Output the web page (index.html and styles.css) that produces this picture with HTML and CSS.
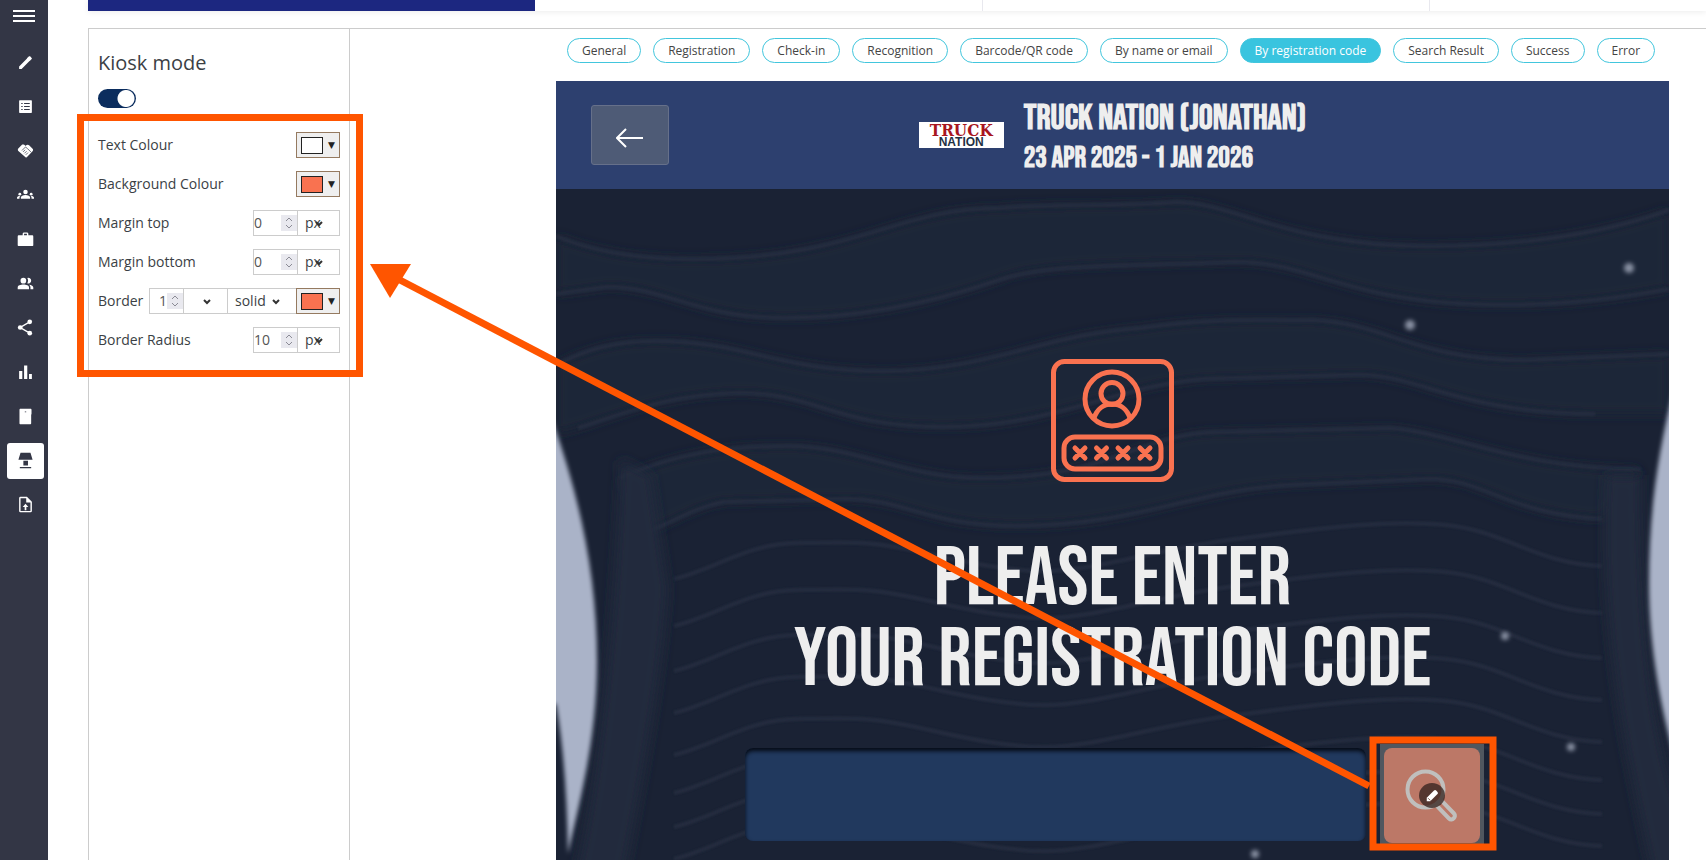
FILE: index.html
```html
<!DOCTYPE html>
<html lang="en">
<head>
<meta charset="utf-8">
<title>Kiosk mode</title>
<link rel="stylesheet" href="styles.css">
</head>
<body>
<div class="shell">
  <nav class="sidebar" aria-label="Main">
    <button class="burger" aria-label="Menu"><span></span><span></span><span></span></button>
    <div class="nav-list">
      <a class="nav-item" href="#" aria-label="Edit"><svg viewBox="0 0 24 24"><path d="M3 17.5V21h3.5L18 9.500 14.500 6zM20.700 7c.5-.5.5-1.100 0-1.500l-2.200-2.200c-.5-.4-1.100-.4-1.500 0L14 6l4 4z"/></svg></a>
      <a class="nav-item" href="#" aria-label="List"><svg viewBox="0 0 24 24"><path fill-rule="evenodd" d="M4 3h16a1 1 0 0 1 1 1v16a1 1 0 0 1-1 1H4a1 1 0 0 1-1-1V4a1 1 0 0 1 1-1zm2 4v1.500h2V7zm4 0v1.500h8V7zm-4 4.200v1.500h2v-1.500zm4 0v1.500h8v-1.500zm-4 4.300V17h2v-1.500zm4 0V17h8v-1.500z"/></svg></a>
      <a class="nav-item" href="#" aria-label="Partners"><svg viewBox="0 0 24 24"><path d="M7 4 1.500 9.500c-.5.8-.4 2 0 2.700L12 21.500c1 .6 2 .2 2.500-.6L22 13c1-1 1-2.300 0-3.300L17.500 5c-1.500-1.300-3.500-1.300-5 0L12 5.500C10.500 4 8.500 3.200 7 4z"/><path class="nav-cut" d="m7 12 5-5 3 2.500 5 5M8.500 14l3-3M10.500 16l3-3M12.500 18l3-3"/></svg></a>
      <a class="nav-item" href="#" aria-label="Groups"><svg viewBox="0 0 24 24"><circle cx="12" cy="8.500" r="3.200"/><path d="M5.500 18v-1.600c0-2.300 3-3.600 6.500-3.600s6.500 1.300 6.500 3.600V18z"/><circle cx="4" cy="11.500" r="2"/><circle cx="20" cy="11.500" r="2"/><path d="M0 18v-1.500c0-1.700 2-2.500 4.700-2.400-.8.700-1.200 1.500-1.200 2.400V18zM24 18v-1.500c0-1.700-2-2.500-4.700-2.400.8.700 1.200 1.500 1.200 2.400V18z"/></svg></a>
      <a class="nav-item" href="#" aria-label="Work"><svg viewBox="0 0 24 24"><path fill-rule="evenodd" d="M20 6h-4V4a2 2 0 0 0-2-2h-4a2 2 0 0 0-2 2v2H2a2 2 0 0 0-1 2v12a1 1 0 0 0 1 1h20a1 1 0 0 0 1-1V8a2 2 0 0 0-1-2zm-6 0h-4V4h4z"/></svg></a>
      <a class="nav-item" href="#" aria-label="People"><svg viewBox="0 0 24 24"><circle cx="9" cy="8" r="4"/><path d="M1 20v-2.500C1 14.800 5 13.500 9 13.500s8 1.300 8 4V20zM14.500 4.300a4 4 0 1 1 0 7.400c1.500-2 1.500-5.400 0-7.400zM17 13.700c3.500.4 6 1.700 6 3.800V20h-4v-2.500c0-1.500-.7-2.800-2-3.800z"/></svg></a>
      <a class="nav-item" href="#" aria-label="Share"><svg viewBox="0 0 24 24"><circle cx="18" cy="4" r="3.300"/><circle cx="4.500" cy="12" r="3.300"/><circle cx="18" cy="20" r="3.300"/><path class="nav-line" d="M18 4 4.500 12 18 20"/></svg></a>
      <a class="nav-item" href="#" aria-label="Reports"><svg viewBox="0 0 24 24"><path d="M3 10h4.500v11H3zM10 2h4.500v19H10zM17 14h4v7h-4z"/></svg></a>
      <a class="nav-item" href="#" aria-label="Badges"><svg viewBox="0 0 24 24"><path fill-rule="evenodd" d="M5 1h14c1 0 1.500.6 1.500 1.500V8L20 10v11.500c0 .9-.5 1.500-1.500 1.500H5c-1 0-1.500-.6-1.500-1.500v-19C3.500 1.600 4 1 5 1zm6 4v1h2V5z"/></svg></a>
      <a class="nav-item active" href="#" aria-label="Kiosk" aria-current="page"><svg viewBox="0 0 24 24"><path d="M5 1h14l3 10H2zM9 12.500h6.500V19H9zM4 21h16v2H4z"/></svg></a>
      <a class="nav-item" href="#" aria-label="Upload file"><svg viewBox="0 0 24 24"><path fill-rule="evenodd" d="M14 1H5a2 2 0 0 0-2 2v18a2 2 0 0 0 2 2h14a2 2 0 0 0 2-2V8zm5 20H5V3h8v6h6zM8 15.500h2.800V20h2.400v-4.500H16L12 11z"/></svg></a>
    </div>
  </nav>

  <main class="main">
    <div class="steps"><span class="step done"></span><span class="step"></span><span class="step"></span><span class="step"></span></div>
    <div class="workspace">
      <aside class="panel">
        <h1 class="panel-title"><label for="kiosk">Kiosk mode</label></h1>
        <input class="toggle" id="kiosk" type="checkbox" role="switch" checked>
        <div class="fields">
          <div class="field"><label for="tc">Text Colour</label><button class="colour" id="tc"><span class="swatch white"></span><span class="caret">▼</span></button></div>
          <div class="field"><label for="bc">Background Colour</label><button class="colour" id="bc"><span class="swatch"></span><span class="caret">▼</span></button></div>
          <div class="field"><label for="mt">Margin top</label><span class="num"><input id="mt" type="number" value="0"><svg class="spin" viewBox="0 0 16 16"><path d="m5 6 3-3 3 3M5 10l3 3 3-3"/></svg></span><span class="pick unit"><select aria-label="Margin top unit"><option>px</option></select><svg viewBox="0 0 8 8"><path d="m1 3 3 3 3-3"/></svg></span></div>
          <div class="field"><label for="mb">Margin bottom</label><span class="num"><input id="mb" type="number" value="0"><svg class="spin" viewBox="0 0 16 16"><path d="m5 6 3-3 3 3M5 10l3 3 3-3"/></svg></span><span class="pick unit"><select aria-label="Margin bottom unit"><option>px</option></select><svg viewBox="0 0 8 8"><path d="m1 3 3 3 3-3"/></svg></span></div>
          <div class="field"><label for="bw">Border</label><span class="num short"><input id="bw" type="number" value="1"><svg class="spin" viewBox="0 0 16 16"><path d="m5 6 3-3 3 3M5 10l3 3 3-3"/></svg></span><span class="pick blank"><select aria-label="Border unit"><option></option></select><svg viewBox="0 0 8 8"><path d="m1 3 3 3 3-3"/></svg></span><span class="pick style"><select aria-label="Border style"><option>solid</option></select><svg viewBox="0 0 8 8"><path d="m1 3 3 3 3-3"/></svg></span><button class="colour" aria-label="Border colour"><span class="swatch"></span><span class="caret">▼</span></button></div>
          <div class="field"><label for="br">Border Radius</label><span class="num"><input id="br" type="number" value="10"><svg class="spin" viewBox="0 0 16 16"><path d="m5 6 3-3 3 3M5 10l3 3 3-3"/></svg></span><span class="pick unit"><select aria-label="Border radius unit"><option>px</option></select><svg viewBox="0 0 8 8"><path d="m1 3 3 3 3-3"/></svg></span></div>
        </div>
      </aside>

      <section class="preview">
        <div class="tabs">
          <button class="tab">General</button><button class="tab">Registration</button><button class="tab">Check-in</button><button class="tab">Recognition</button><button class="tab">Barcode/QR code</button><button class="tab">By name or email</button><button class="tab selected">By registration code</button><button class="tab">Search Result</button><button class="tab">Success</button><button class="tab">Error</button>
        </div>
        <div class="kiosk">
          <header class="kiosk-head">
            <button class="back" aria-label="Back"><svg viewBox="0 0 28 20"><path d="M27 10H1M10 1 1 10l9 9"/></svg></button>
            <div class="event">
              <div class="logo"><span class="logo-top">TRUCK</span><span class="logo-sub">NATION</span></div>
              <div class="event-text"><p class="event-name">TRUCK NATION (JONATHAN)</p><p class="event-date">23 APR 2025 - 1 JAN 2026</p></div>
            </div>
          </header>
          <div class="hero">
            <svg class="waves" viewBox="0 0 1113 671" preserveAspectRatio="xMidYMin slice" aria-hidden="true">
              <defs>
                <filter id="soft" x="-20%" y="-20%" width="140%" height="140%"><feGaussianBlur stdDeviation="2"/></filter>
                <filter id="haze"><feGaussianBlur stdDeviation="1"/></filter>
                <filter id="wide" x="-50%" y="-20%" width="200%" height="140%"><feGaussianBlur stdDeviation="6"/></filter>
                <path id="wave" d="M118 390C160 380 190 355 240 354S310 352 350 360S440 382 490 382S600 360 680 350S830 330 890 336S980 375 1046 377"/>
              </defs>
              <g class="shade" filter="url(#wide)">
                <path d="M0 47C40 64 90 70 137 70C300 70 340 19 443 19C500 14 560 18 621 13C680 14 730 57 872 57C980 57 1060 40 1113 21V100C1060 110 1010 116 950 116C790 116 760 73 679 73C500 76 470 80 443 91C370 116 300 129 229 129C140 129 110 98 51 98L0 105Z"/>
                <path d="M0 176C30 160 60 152 99 152C190 152 220 182 328 182C430 182 490 145 584 139C660 128 700 132 757 131C830 134 860 171 969 171L1113 165V225L1039 225C900 224 860 184 800 186L650 190C560 196 500 238 386 238C280 238 260 204 183 204C110 206 70 224 22 239L0 245Z"/>
                <path d="M64 289C120 264 170 257 233 257C300 257 350 289 424 289C560 289 580 245 660 243L834 239C900 244 960 280 1085 280L1046 330C950 325 930 290 873 290L737 296C640 300 580 337 462 337C370 337 350 310 290 310L168 313C130 320 110 340 84 343Z"/>
              </g>
              <g class="lines" filter="url(#haze)">
                <path d="M0 47C40 64 90 70 137 70C300 70 340 19 443 19C500 14 560 18 621 13C680 14 730 57 872 57C980 57 1060 40 1113 21"/>
                <path d="M0 105 51 98C110 98 140 129 229 129C300 129 370 116 443 91C500 73 580 78 679 73C760 73 790 116 950 116C1010 116 1060 110 1113 100"/>
                <path d="M0 176C30 160 60 152 99 152C190 152 220 182 328 182C430 182 490 145 584 139C660 128 700 132 757 131C830 134 860 171 969 171L1113 165"/>
                <path d="M22 239C70 224 110 206 183 204C260 204 280 238 386 238C500 238 560 196 650 190L800 186C860 184 900 224 1039 225"/>
                <path d="M64 289C120 264 170 257 233 257C300 257 350 289 424 289C560 289 580 245 660 243L834 239C900 244 960 280 1085 280"/>
                <path d="M84 343C110 340 130 320 168 313L290 310C350 310 370 337 462 337C580 337 640 300 737 296L873 290C930 290 950 325 1046 330"/>
                <use href="#wave"/><use href="#wave" y="47"/><use href="#wave" y="92"/><use href="#wave" y="134"/><use href="#wave" y="176"/><use href="#wave" y="214"/><use href="#wave" y="248"/><use href="#wave" y="280"/>
              </g>
              <path class="trunk" filter="url(#wide)" d="M64 270 95 286 112 400C105 500 85 600 68 690H18C45 580 60 400 64 270ZM1050 286 1085 286C1085 450 1100 560 1125 620V690H1097C1075 590 1040 450 1050 286Z"/>
              <path class="light" filter="url(#soft)" d="M-6 225C25 310 41 390 41 472C41 550 24 610 12 665C11 610 8 560 0 515H-6ZM1119 195C1100 270 1093 330 1093 394S1105 520 1119 570Z"/>
              <g class="dots" filter="url(#soft)"><circle cx="1073" cy="79" r="5"/><circle cx="854" cy="136" r="5"/><circle cx="949" cy="447" r="4"/><circle cx="1015" cy="558" r="4"/><circle cx="699" cy="665" r="4"/></g>
            </svg>
            <svg class="code-icon" viewBox="0 0 123 123" aria-hidden="true">
              <rect x="2.500" y="2.500" width="118" height="118" rx="11"/><circle cx="61" cy="40" r="27"/><circle cx="61" cy="34.500" r="11"/><path d="M43 59c3-9 10-14 18-14s15 5 18 14"/><rect x="13" y="78" width="97" height="32" rx="11"/>
              <path class="crosses" d="m24 89 10 10m0-10L24 99m21.500-10 10 10m0-10-10 10m21.500-10 10 10m0-10L67 99m22-10 10 10m0-10L89 99"/>
            </svg>
            <h2 class="prompt"><label for="code">PLEASE ENTER<br>YOUR REGISTRATION CODE</label></h2>
            <div class="entry">
              <input class="code-input" id="code" type="text">
              <button class="search" aria-label="Search"><span class="search-face"><svg class="lens" viewBox="0 0 54 54"><circle cx="20.500" cy="20.500" r="18"/><path d="m31 36 5-5 13 13.500c3 3-2 8-5 5z"/></svg><span class="edit-badge"><svg viewBox="0 0 16 16"><path d="M2 14v-4l8-8c1-1 2-1 3 0l1 1c1 1 1 2 0 3l-8 8z"/><path class="tip" d="M3.500 10.500 6 13"/></svg></span></span></button>
            </div>
          </div>
        </div>
      </section>
    </div>
  </main>
</div>
<svg class="markup" aria-hidden="true">
  <rect x="80.500" y="117.500" width="279" height="256"/>
  <rect x="1373" y="740" width="120" height="107"/>
  <path d="M1369 786 398 279"/>
  <path class="head" d="M370 264H411L390 298Z"/>
</svg>
</body>
</html>
```

FILE: styles.css
```css
* { box-sizing: border-box; }
body {
  margin: 0;
  position: relative;
  overflow: hidden;
  background: #fff;
  color: #3b3f45;
  font-family: "Open Sans", "Noto Sans", sans-serif;
  font-size: 14px;
}
button, input, select { font: inherit; color: inherit; margin: 0; padding: 0; }
h1, h2, p { margin: 0; font-weight: 400; }
.shell { display: flex; height: 100vh; }

.sidebar { width: 48px; flex: none; background: #333645; padding-top: 10px; display: flex; flex-direction: column; align-items: center; }
.burger { width: 22px; background: none; border: 0; display: flex; flex-direction: column; gap: 3px; }
.burger span { height: 2px; background: #fff; }
.nav-list { width: 100%; height: 479px; margin-top: 22px; padding: 0 4px 0 7px; display: flex; flex-direction: column; justify-content: space-between; }
.nav-item { height: 36px; border-radius: 3px; display: flex; align-items: center; justify-content: center; color: #fff; }
.nav-item.active { background: #fff; color: #333645; }
.nav-item svg { width: 17px; height: 17px; fill: currentColor; overflow: visible; }
.nav-cut { fill: none; stroke: #333645; }
.nav-line { fill: none; stroke: currentColor; stroke-width: 2; }

.main { flex: 1; min-width: 0; padding-left: 40px; display: flex; flex-direction: column; }
.steps { display: flex; height: 11px; box-shadow: 0 1px 6px rgba(0, 0, 0, .08); overflow: hidden; }
.step { width: 447px; flex: none; }
.step + .step + .step { border-left: 1px solid #e8e8ee; }
.step.done { background: #1c2780; }
.workspace { flex: 1; min-height: 0; margin-top: 17px; border: solid #ccc; border-width: 1px 0 0 1px; display: flex; }

.panel { width: 261px; flex: none; border-right: 1px solid #ccc; padding: 17px 9px 0; }
.panel-title { font-size: 20px; line-height: 34px; }
.toggle { appearance: none; display: block; width: 38px; height: 19px; margin: 9px 0 24px; border-radius: 10px; background: radial-gradient(circle at 28px 50%, #fff 8px, #0b2d5e 9px); }
.fields { display: flex; flex-direction: column; gap: 13px; }
.field { display: flex; align-items: flex-start; height: 26px; line-height: 26px; }
.field > label { margin-right: auto; }
.colour { width: 44px; height: 26px; border: 1px solid #957a60; background: #efefef; display: flex; align-items: center; gap: 5px; padding-left: 4px; }
.swatch { width: 22px; height: 17px; border: 1px solid #222; background: #f97250; }
.swatch.white { background: #fff; }
.caret { font: 9px/12px "DejaVu Sans", sans-serif; color: #222; }
.num { width: 45px; height: 26px; border: 1px solid #ccc; display: flex; align-items: center; }
.num input { width: 27px; flex: 1; min-width: 0; height: 24px; border: 0; background: none; appearance: textfield; line-height: 24px; color: #555; }
.num input::-webkit-inner-spin-button { appearance: none; }
.num.short { width: 35px; }
.num.short input { text-align: right; }
.spin { width: 16px; height: 16px; flex: none; background: #e9e9ef; fill: none; stroke: #8b8b95; }
.pick { position: relative; height: 26px; display: flex; border: 1px solid #ccc; border-left: 0; }
.pick select { appearance: none; width: 100%; height: 24px; line-height: 24px; border: 0; background: none; padding-left: 7px; }
.pick svg { position: absolute; right: 16px; top: 8px; width: 8px; height: 8px; fill: none; stroke: #333; stroke-width: 2; }
.pick.unit { width: 42px; }
.pick.blank { width: 44px; }
.pick.style { width: 68px; border-right: 0; }

.preview { flex: 1; min-width: 0; padding: 9px 37px 0 206px; display: flex; flex-direction: column; }
.tabs { display: flex; gap: 12px; margin: 0 11px 18px; }
.tab { height: 25px; padding: 0 14px; border: 1px solid #42c6dd; border-radius: 13px; background: #fff; font-size: 12px; white-space: nowrap; color: #444; }
.tab.selected { background: #39c4df; color: #fff; }

.kiosk { flex: 1; min-height: 0; display: flex; flex-direction: column; color: #eee; }
.kiosk-head { height: 108px; background: #2d406f; padding: 0 35px; display: grid; grid-template-columns: 1fr auto 1fr; align-items: center; }
.back { width: 78px; height: 60px; border: 1px solid #66708a; border-radius: 3px; background: #4e5b76; display: grid; place-items: center; padding-top: 6px; }
.back svg { width: 28px; height: 20px; fill: none; stroke: #fff; stroke-width: 2; }
.event { display: flex; align-items: center; gap: 20px; }
.event-text { padding-top: 7px; }
.event p { font-family: "Bebas Neue", "Liberation Sans Narrow", sans-serif; font-weight: 700; white-space: nowrap; line-height: 40px; }
.event-name { font-size: 35px; }
.event-date { font-size: 29px; }
.logo { width: 85px; height: 26px; background: #fff; font-weight: 700; display: flex; flex-direction: column; align-items: center; }
.logo-top { color: #a81620; font-family: "DejaVu Serif Condensed", "DejaVu Serif", serif; font-size: 17px; line-height: 16px; }
.logo-sub { color: #1f3245; font-family: "Liberation Sans", sans-serif; font-size: 12px; line-height: 9px; }

.hero { flex: 1; min-height: 0; position: relative; overflow: hidden; background: #1a2234; padding-top: 170px; display: flex; flex-direction: column; align-items: center; }
.waves { position: absolute; inset: 0; width: 100%; height: 100%; }
.shade { fill: #1e2639; }
.lines { fill: none; stroke: #2a3244; stroke-width: 4; opacity: .65; }
.trunk { fill: #232b3d; }
.light { fill: #aab3c8; }
.dots { fill: #8890a2; }
.code-icon { position: relative; flex: none; width: 123px; height: 123px; fill: none; stroke: #f97250; stroke-width: 5; }
.crosses { stroke-width: 5; stroke-linecap: round; }
.prompt { position: relative; margin: 57px 0 47px; text-align: center; font-family: "Bebas Neue", "Liberation Sans Narrow", sans-serif; font-size: 83px; line-height: 81px; white-space: nowrap; }
.entry { position: relative; display: flex; gap: 14px; }
.code-input { width: 621px; height: 93px; border: 0; border-radius: 8px; background: #21395e; box-shadow: inset 0 3px 4px #050a14; padding: 0 20px; font-size: 32px; color: #eee; }
.search { margin: -4px -4px 0 0; height: 103px; padding: 4px; border: 0; background: #50575f; }
.search-face { position: relative; width: 96px; height: 95px; border-radius: 8px; background: #bc7867; display: grid; place-items: center; }
.lens { width: 54px; height: 54px; fill: none; stroke: #c0bfbd; stroke-width: 4; }
.edit-badge { position: absolute; inset: 35px; border-radius: 50%; background: rgba(50, 32, 28, .75); display: grid; place-items: center; }
.edit-badge svg { width: 14px; height: 14px; fill: #fff; }
.tip { stroke: #6b4a40; }

.markup { position: absolute; inset: 0; width: 100%; height: 100%; pointer-events: none; fill: none; stroke: #f50; stroke-width: 7; }
.markup .head { fill: #f50; stroke: none; }
```
